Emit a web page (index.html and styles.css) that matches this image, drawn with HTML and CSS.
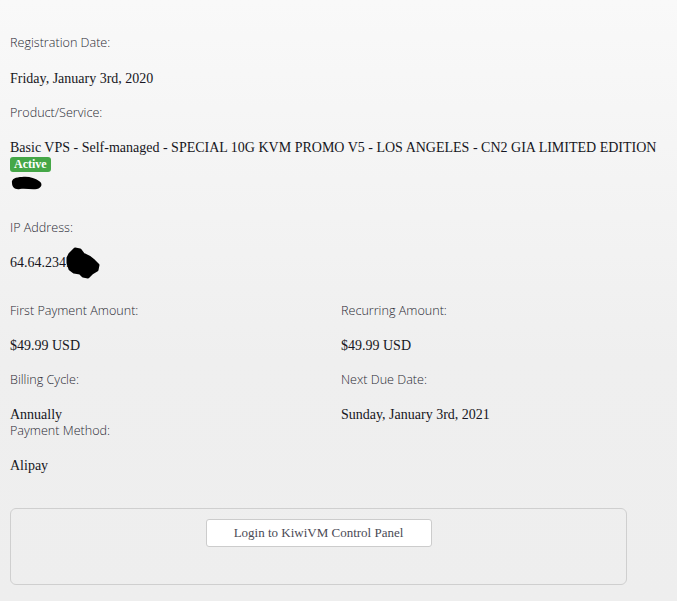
FILE: index.html
```html
<!DOCTYPE html>
<html lang="en">
  <head>
    <meta charset="utf-8" />
    <title>Product Details</title>
    <link rel="stylesheet" href="styles.css">
  </head>
  <body>
    <div class="details">
      <div class="field">
        <div class="field__label">Registration Date:</div>
        <div class="field__value">Friday, January 3rd, 2020</div>
      </div>

      <div class="field field--product">
        <div class="field__label">Product/Service:</div>
        <div class="field__value field__value--flush">Basic VPS - Self-managed - SPECIAL 10G KVM PROMO V5 - LOS ANGELES - CN2 GIA LIMITED EDITION</div>
        <span class="badge">Active</span>
        <!-- hostname blacked out -->
        <svg class="redact redact--host" viewBox="0 0 33 16" width="33" height="16">
          <path d="M2 8 C1 4 6 2 12 2 C18 1 25 3 29 6 C33 8 32 13 27 14 C21 15 16 13 10 14 C5 15 2 12 2 8 Z" fill="#000" />
        </svg>
      </div>

      <div class="field">
        <div class="field__label">IP Address:</div>
        <div class="field__value field__value--ip">64.64.234.<svg class="redact redact--ip" viewBox="0 0 34 32" width="34" height="32">
            <path d="M4 7 L9 2 L14 3 L17 7 L23 10 L28 14 L32 18 L31 23 L26 26 L22 30 L17 29 L14 26 L8 25 L4 22 L2 16 L2 11 Z" fill="#000" stroke="#000" stroke-width="3" stroke-linejoin="round" />
          </svg></div>
      </div>

      <div class="pair">
        <div class="field">
          <div class="field__label">First Payment Amount:</div>
          <div class="field__value">$49.99 USD</div>
        </div>
        <div class="field">
          <div class="field__label">Recurring Amount:</div>
          <div class="field__value">$49.99 USD</div>
        </div>
      </div>

      <div class="pair">
        <div class="field">
          <div class="field__label">Billing Cycle:</div>
          <div class="field__value field__value--tight">Annually</div>
        </div>
        <div class="field">
          <div class="field__label">Next Due Date:</div>
          <div class="field__value field__value--tight">Sunday, January 3rd, 2021</div>
        </div>
      </div>

      <div class="field">
        <div class="field__label">Payment Method:</div>
        <div class="field__value">Alipay</div>
      </div>

      <div class="panel">
        <button class="panel__btn" type="button">Login to KiwiVM Control Panel</button>
      </div>
    </div>
  </body>
</html>
```

FILE: styles.css
```css
/* Base */
*, *::before, *::after {
  box-sizing: border-box;
}

html, body {
  margin: 0;
  padding: 0;
  height: 100%;
}

body {
  background: linear-gradient(180deg, #f9f9f9 0%, #efefef 60%, #eeeeee 100%);
  color: #1b1b2a;
  overflow: hidden;
}

.details {
  padding: 34px 10px 0 10px;
}

/* Label / value rows */
.field__label {
  font-family: 'Open Sans', 'Liberation Sans', sans-serif;
  font-weight: 300;
  font-size: 12.6px;
  line-height: 18px;
  color: #2a2a34;
  margin-bottom: 17.5px;
}

.field__value {
  font-family: 'Liberation Serif', serif;
  font-size: 14px;
  line-height: 18px;
  color: #161622;
  margin-bottom: 16px;
}

.field__value--flush {
  margin-bottom: 0;
}

.field__value--tight {
  margin-bottom: 0;
  line-height: 15px;
}

.field--product {
  margin-bottom: 28px;
}

.field__value--ip {
  display: flex;
  align-items: center;
  height: 18px;
  margin-top: -1px;
  margin-bottom: 30px;
}

.redact {
  display: block;
}

.redact--host {
  margin-top: 3px;
}

.redact--ip {
  margin-left: -4px;
  margin-top: 1px;
}

/* Status badge */
.badge {
  display: block;
  width: fit-content;
  background: #45a747;
  color: #fff;
  font-family: 'Liberation Serif', serif;
  font-weight: bold;
  font-size: 12px;
  line-height: 15px;
  padding: 0 4px;
  border-radius: 3px;
}

/* Two columns */
.pair {
  display: grid;
  grid-template-columns: 331px 1fr;
}

/* Panel with button */
.panel {
  margin-top: 33px;
  width: 617px;
  height: 77px;
  border: 1px solid #cfcfcf;
  border-radius: 6px;
  display: flex;
  justify-content: center;
  align-items: flex-start;
  padding-top: 10px;
}

.panel__btn {
  width: 226px;
  height: 28px;
  background: #fff;
  border: 1px solid #cccccc;
  border-radius: 3px;
  font-family: 'Liberation Serif', serif;
  font-size: 13px;
  color: #4a4a55;
  cursor: pointer;
}
```
